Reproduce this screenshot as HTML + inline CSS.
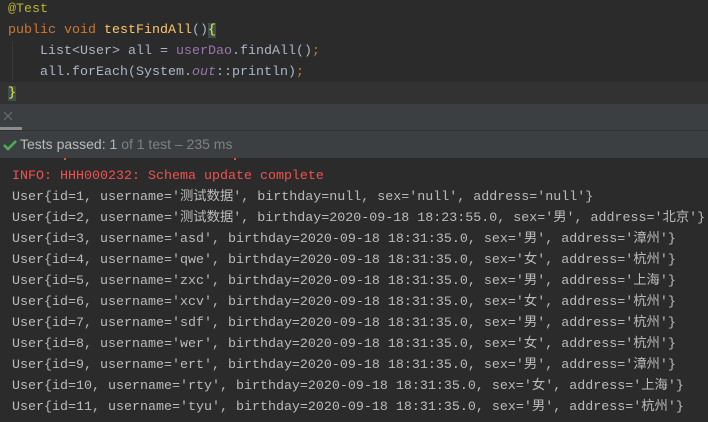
<!DOCTYPE html>
<html><head><meta charset="utf-8"><style>
body{margin:0;width:708px;height:422px;overflow:hidden;background:#2b2b2b;font-family:"Liberation Mono","Noto Sans CJK SC",monospace;font-size:13.33px;}
.code{position:absolute;left:0;top:0;width:708px;height:104px;background:#2b2b2b;}
.ln{position:absolute;left:8px;height:21px;line-height:21px;white-space:pre;color:#a9b7c6;}
.cur{position:absolute;left:0;top:82px;width:708px;height:22px;background:#323232;}
.k{color:#cc7832}.m{color:#ffc66d}.a{color:#bbb529}.f{color:#9876aa}.i{color:#9876aa;font-style:italic}
.br{background:#3b514d;color:#ffef28}
.guide{position:absolute;left:12px;top:41px;width:1px;height:42px;background:#393939}
.tb{position:absolute;left:0;top:104px;width:708px;height:26px;background:#3c3f41;}
.sb{position:absolute;left:0;top:131px;width:708px;height:27px;background:#3c3f41;font-family:"Liberation Sans",sans-serif;font-size:14px;line-height:27px;}
.con{position:absolute;left:0;top:158px;width:708px;height:264px;background:#2b2b2b;}
.cl{position:absolute;left:12px;height:21px;line-height:21px;white-space:pre;color:#bbbbbb;}
</style></head><body>
<div class="code">
<div class="cur"></div>
<div class="guide"></div>
<div class="ln" style="top:-1px"><span class="a">@Test</span></div>
<div class="ln" style="top:20px"><span class="k">public void </span><span class="m">testFindAll</span>()<span class="br">{</span></div>
<div class="ln" style="top:41px">    List&lt;User&gt; all = <span class="f">userDao</span>.findAll()<span class="k">;</span></div>
<div class="ln" style="top:62px">    all.forEach(System.<span class="i">out</span>::println)<span class="k">;</span></div>
<div class="ln" style="top:83px"><span class="br">}</span></div>
</div>
<div class="tb">
<svg style="position:absolute;left:3px;top:7px" width="10" height="10"><path d="M1 1L9 9M9 1L1 9" stroke="#6e6e6e" stroke-width="1.2"/></svg>
<div style="position:absolute;left:0;top:23px;width:22px;height:3px;background:#8c8c8c"></div>
</div>
<div style="position:absolute;left:0;top:130px;width:708px;height:1px;background:#323232"></div>
<div class="sb">
<svg style="position:absolute;left:3px;top:8px" width="14" height="12"><path d="M1 6L5 10L13 2" stroke="#4dad56" stroke-width="2.6" fill="none"/></svg>
<span style="position:absolute;left:20px;color:#bbbbbb">Tests passed: <span style="color:#a9b7c6">1</span> <span style="color:#808080">of 1 test – 235 ms</span></span>
</div>
<div class="con">
<div style="position:absolute;left:64px;top:0;width:2px;height:2px;background:#e0523f"></div>
<div style="position:absolute;left:234px;top:0;width:2px;height:2px;background:#e0523f"></div>
<div class="cl" style="top:8px;color:#f0524f">INFO: HHH000232: Schema update complete</div>
<div class="cl" style="top:29px">User{id=1, username='测试数据', birthday=null, sex='null', address='null'}</div>
<div class="cl" style="top:50px">User{id=2, username='测试数据', birthday=2020-09-18 18:23:55.0, sex='男', address='北京'}</div>
<div class="cl" style="top:71px">User{id=3, username='asd', birthday=2020-09-18 18:31:35.0, sex='男', address='漳州'}</div>
<div class="cl" style="top:92px">User{id=4, username='qwe', birthday=2020-09-18 18:31:35.0, sex='女', address='杭州'}</div>
<div class="cl" style="top:113px">User{id=5, username='zxc', birthday=2020-09-18 18:31:35.0, sex='男', address='上海'}</div>
<div class="cl" style="top:134px">User{id=6, username='xcv', birthday=2020-09-18 18:31:35.0, sex='女', address='杭州'}</div>
<div class="cl" style="top:155px">User{id=7, username='sdf', birthday=2020-09-18 18:31:35.0, sex='男', address='杭州'}</div>
<div class="cl" style="top:176px">User{id=8, username='wer', birthday=2020-09-18 18:31:35.0, sex='女', address='杭州'}</div>
<div class="cl" style="top:197px">User{id=9, username='ert', birthday=2020-09-18 18:31:35.0, sex='男', address='漳州'}</div>
<div class="cl" style="top:218px">User{id=10, username='rty', birthday=2020-09-18 18:31:35.0, sex='女', address='上海'}</div>
<div class="cl" style="top:239px">User{id=11, username='tyu', birthday=2020-09-18 18:31:35.0, sex='男', address='杭州'}</div>
</div>
</body></html>
